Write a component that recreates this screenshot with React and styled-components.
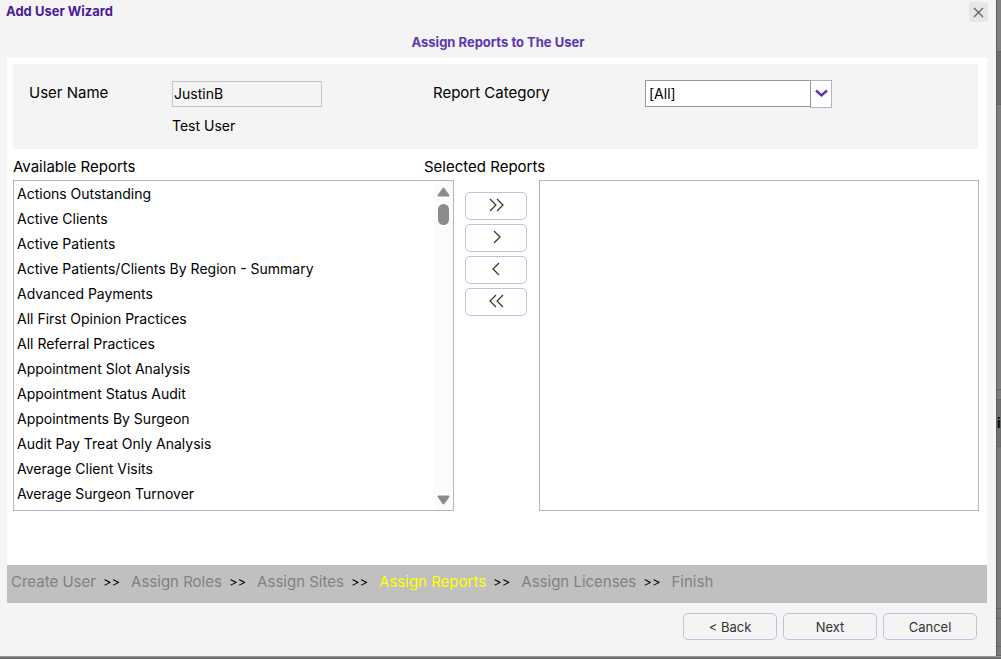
import React, { useState } from "react"
import styled, { createGlobalStyle } from "styled-components"

const GlobalStyle = createGlobalStyle`
  * {
    box-sizing: border-box;
  }

  body {
    margin: 0;
    background: #777;
    color: #000;
    font-family: Inter, "Liberation Sans", sans-serif;
    font-size: 14px;
    line-height: 18px;
  }

  button,
  input,
  select {
    font: inherit;
    color: inherit;
  }
`

const Page = styled.div`
  display: grid;
  grid-template-columns: minmax(0, 1fr) 5px;
  grid-template-rows: 1fr 3px;
  height: 100vh;
  overflow: hidden;
`

const Dialog = styled.main`
  display: flex;
  flex-direction: column;
  background: #f4f4f4;
`

const SideStrip = styled.div`
  display: flex;
  flex-direction: column;
  overflow: hidden;
  border-left: 1px solid #5c5c5c;
`

const StripPart = styled.div`
  display: flex;
  align-items: center;
  flex: ${(props) => props.$size} 0 0;
  min-height: 0;
  background: ${(props) => props.$color};
  border-bottom: 1px solid #626262;
  font-size: 13px;
  font-weight: 700;
`

const BottomStrip = styled.div`
  grid-column: 1 / -1;
  border-top: 1px solid #999;
  background: #716e6e;
`

const TitleBar = styled.header`
  display: flex;
  justify-content: space-between;
  height: 33px;
  padding: 2px 8px 0 6px;
`

const Title = styled.h1`
  margin: 0;
  font-size: 13px;
  font-weight: 700;
  line-height: 18px;
  color: #4b1a96;
`

const CloseButton = styled.button`
  display: flex;
  align-items: center;
  justify-content: center;
  width: 19px;
  height: 20px;
  padding: 0;
  border: none;
  border-radius: 4px;
  background: #e6e6e6;
`

const StepTitle = styled.h2`
  height: 25px;
  margin: 0;
  font-size: 13px;
  font-weight: 700;
  line-height: 18px;
  text-align: center;
  color: #5c36b0;
`

const Body = styled.div`
  flex: 1;
  margin: 0 9px 0 7px;
  padding: 6px 8px 0 6px;
  background: #fff;
`

const Filters = styled.section`
  display: grid;
  grid-template-columns: 143px 261px 212px 187px;
  align-content: start;
  height: 85px;
  padding: 16px 0 0 16px;
  margin-right: 1px;
  background: #f4f4f4;
`

const FieldLabel = styled.label`
  font-size: 15px;
  line-height: 26px;
`

const UserInput = styled.input`
  width: 150px;
  height: 26px;
  margin-top: 1px;
  padding: 0 1px 2px;
  border: 1px solid #c6c6c6;
  border-radius: 0;
  background: #f4f4f4;
`

const FullName = styled.div`
  grid-column: 2;
  line-height: 36px;
`

const Combo = styled.div`
  display: grid;
  grid-template-columns: 1fr 22px;
  height: 28px;
`

const ComboSelect = styled.select`
  grid-area: 1 / 1 / 2 / 3;
  appearance: none;
  height: 27px;
  padding: 0 24px 0 3px;
  border: 1px solid #999;
  border-radius: 0;
  background: #fff;
`

const ComboArrow = styled.span`
  grid-area: 1 / 2;
  z-index: 1;
  display: flex;
  align-items: center;
  justify-content: center;
  padding-bottom: 2px;
  border: 1px solid #b3b3cf;
  border-left-color: #999;
  border-top-right-radius: 2px;
  background: #fff;
  pointer-events: none;
`

const Picker = styled.section`
  display: grid;
  grid-template-columns: minmax(0, 441fr) 85px minmax(0, 440fr);
  grid-template-rows: 31px 331px;
`

const ListLabel = styled.label`
  grid-area: 1 / 1;
  padding-top: 9px;
  font-size: 15px;
`

// starts left of the list it names, over the button column
const SelectedLabel = styled(ListLabel)`
  grid-area: 1 / 1 / 2 / 4;
  justify-self: start;
  margin-left: calc(50% - 72px);
`

const ListFrame = styled.div`
  grid-row: 2;
  display: flex;
  border: 1px solid #b3b3cb;
  background: #fff;
`

const List = styled.select`
  flex: 1;
  min-width: 0;
  height: 329px;
  padding: 1px 0 0;
  border: none;
  outline: none;
  background: transparent;
  overflow-y: auto;
  scrollbar-width: none;

  option {
    min-height: 25px;
    padding: 3px 3px 0;
  }
`

const ScrollTrack = styled.div`
  display: flex;
  flex-direction: column;
  align-items: center;
  width: 19px;
  padding: 6px 0 5px;
  background: #fcfcfc;
`

const ScrollThumb = styled.span`
  width: 11px;
  height: 21px;
  margin: 7px 0 auto;
  border-radius: 6px;
  background: #8b8b8b;
`

const Movers = styled.div`
  grid-row: 2;
  display: flex;
  flex-direction: column;
  gap: 4px;
  padding: 12px 12px 0 11px;
`

const OutlineButton = styled.button`
  display: flex;
  align-items: center;
  justify-content: center;
  padding: 0;
  border: 1px solid #c6bedf;
  border-radius: 5px;
  background: transparent;
  color: #333;
`

const MoveButton = styled(OutlineButton)`
  height: 28px;
  padding-bottom: 2px;
`

const Steps = styled.nav`
  display: flex;
  gap: 7px;
  height: 38px;
  margin: 0 9px 0 7px;
  padding: 7px 4px 0;
  background: #c0c0c0;
  font-size: 15px;
  line-height: 20px;
`

const Step = styled.span`
  color: ${(props) => (props.$active ? "#ff0" : "#808080")};
`

const StepArrow = styled.span`
  margin-right: 4px;
  font-size: 13px;
`

const Footer = styled.footer`
  display: flex;
  justify-content: flex-end;
  gap: 6px;
  height: 53px;
  padding: 10px 19px 0 0;
`

const FooterButton = styled(OutlineButton)`
  width: 94px;
  height: 27px;
  font-size: 13px;
`

const REPORTS = [
  "Actions Outstanding",
  "Active Clients",
  "Active Patients",
  "Active Patients/Clients By Region - Summary",
  "Advanced Payments",
  "All First Opinion Practices",
  "All Referral Practices",
  "Appointment Slot Analysis",
  "Appointment Status Audit",
  "Appointments By Surgeon",
  "Audit Pay Treat Only Analysis",
  "Average Client Visits",
  "Average Surgeon Turnover",
]

const STEPS = [
  "Create User",
  "Assign Roles",
  "Assign Sites",
  "Assign Reports",
  "Assign Licenses",
  "Finish",
]

const MOVES = [
  { label: "Add all", paths: ["M2 1l6 6-6 6", "M9 1l6 6-6 6"] },
  { label: "Add", paths: ["M6 1l6 6-6 6"] },
  { label: "Remove", paths: ["M11 1l-6 6 6 6"] },
  { label: "Remove all", paths: ["M8 1l-6 6 6 6", "M15 1l-6 6 6 6"] },
]

export default function AddUserWizard() {
  const [available, setAvailable] = useState(REPORTS)
  const [selected, setSelected] = useState([])
  const [marked, setMarked] = useState([])

  const readMarked = (e) =>
    setMarked(Array.from(e.target.selectedOptions, (o) => o.value))

  const move = (label) => {
    const adding = label.startsWith("Add")
    const source = adding ? available : selected
    const moving = label.endsWith("all")
      ? source
      : source.filter((name) => marked.includes(name))
    const rest = source.filter((name) => !moving.includes(name))
    if (adding) {
      setAvailable(rest)
      setSelected([...selected, ...moving])
    } else {
      setSelected(rest)
      setAvailable([...available, ...moving].sort())
    }
    setMarked([])
  }

  return (
    <Page>
      <GlobalStyle />
      <Dialog>
        <TitleBar>
          <Title>Add User Wizard</Title>
          <CloseButton aria-label="Close">
            <svg width="11" height="11" viewBox="0 0 11 11">
              <path d="M1 1l9 9M10 1l-9 9" stroke="#666" strokeWidth="1.4" />
            </svg>
          </CloseButton>
        </TitleBar>
        <StepTitle>Assign Reports to The User</StepTitle>
        <Body>
          <Filters>
            <FieldLabel htmlFor="user-name">User Name</FieldLabel>
            <UserInput id="user-name" defaultValue="JustinB" readOnly />
            <FieldLabel htmlFor="category">Report Category</FieldLabel>
            <Combo>
              <ComboSelect id="category">
                <option>[All]</option>
              </ComboSelect>
              <ComboArrow>
                <svg width="13" height="9" viewBox="0 0 13 9" fill="none">
                  <path d="M1 1.5l5.5 5 5.5-5" stroke="#5b32a8" strokeWidth="2.4" />
                </svg>
              </ComboArrow>
            </Combo>
            <FullName>Test User</FullName>
          </Filters>
          <Picker>
            <ListLabel htmlFor="available">Available Reports</ListLabel>
            <SelectedLabel htmlFor="selected">Selected Reports</SelectedLabel>
            <ListFrame>
              <List id="available" multiple value={marked} onChange={readMarked}>
                {available.map((name) => (
                  <option key={name}>{name}</option>
                ))}
              </List>
              <ScrollTrack>
                <svg width="13" height="10" viewBox="0 0 13 10">
                  <path
                    d="M6.5 1.5L11.5 8.5H1.5z"
                    fill="#8b8b8b"
                    stroke="#8b8b8b"
                    strokeWidth="2"
                    strokeLinejoin="round"
                  />
                </svg>
                <ScrollThumb />
                <svg width="13" height="10" viewBox="0 0 13 10">
                  <path
                    d="M6.5 8.5L1.5 1.5H11.5z"
                    fill="#8b8b8b"
                    stroke="#8b8b8b"
                    strokeWidth="2"
                    strokeLinejoin="round"
                  />
                </svg>
              </ScrollTrack>
            </ListFrame>
            <Movers>
              {MOVES.map(({ label, paths }) => (
                <MoveButton
                  key={label}
                  aria-label={label}
                  onClick={() => move(label)}
                >
                  <svg width="17" height="14" viewBox="0 0 17 14" fill="none">
                    {paths.map((d) => (
                      <path key={d} d={d} stroke="#333" strokeWidth="1.2" />
                    ))}
                  </svg>
                </MoveButton>
              ))}
            </Movers>
            <ListFrame>
              <List id="selected" multiple value={marked} onChange={readMarked}>
                {selected.map((name) => (
                  <option key={name}>{name}</option>
                ))}
              </List>
            </ListFrame>
          </Picker>
        </Body>
        <Steps>
          {STEPS.map((step, i) => (
            <React.Fragment key={step}>
              {i > 0 && <StepArrow>&gt;&gt;</StepArrow>}
              <Step $active={step === "Assign Reports"}>{step}</Step>
            </React.Fragment>
          ))}
        </Steps>
        <Footer>
          <FooterButton>&lt; Back</FooterButton>
          <FooterButton>Next</FooterButton>
          <FooterButton>Cancel</FooterButton>
        </Footer>
      </Dialog>
      <SideStrip>
        <StripPart $size={52} $color="#808080" />
        <StripPart $size={52} $color="#6d6d6d" />
        <StripPart $size={288} $color="#7d7d7d" />
        <StripPart $size={10} $color="#7d7d7d" />
        <StripPart $size={46} $color="#6f6f6f">is</StripPart>
        <StripPart $size={163} $color="#7b7b7b" />
        <StripPart $size={10} $color="#7b7b7b" />
        <StripPart $size={27} $color="#7b7b7b" />
        <StripPart $size={8} $color="#7b7b7b" />
      </SideStrip>
      <BottomStrip />
    </Page>
  )
}
